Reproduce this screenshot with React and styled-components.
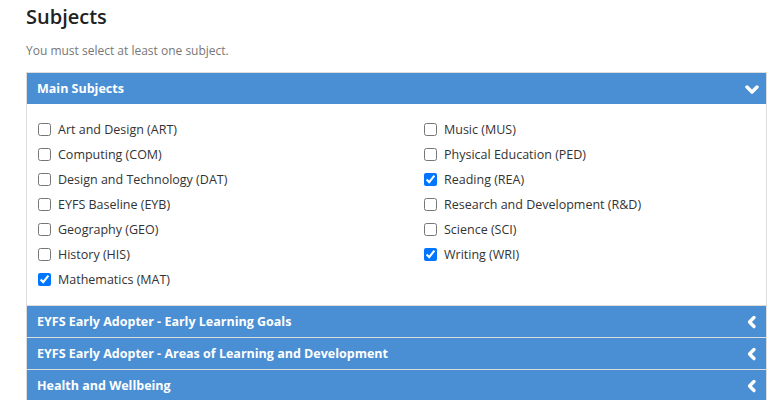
import React from "react";
import styled, { createGlobalStyle } from "styled-components";

const GlobalStyle = createGlobalStyle`
  body {
    margin: 0;
    background: #fff;
    font-family: "Open Sans", "Noto Sans", sans-serif;
    color: #333;
  }
`;

const Page = styled.div`
  padding: 0 6px 0 26px;
`;

const Title = styled.h2`
  margin: 0;
  padding-top: 3px;
  font-size: 20px;
  line-height: 28px;
  font-weight: 600;
  color: #222;
`;

const Hint = styled.p`
  margin: 11px 0 0;
  font-size: 12px;
  line-height: 18px;
  color: #777;
`;

const Accordion = styled.div`
  margin-top: 12px;
  border: 1px solid #ddd;
  border-bottom: none;
`;

const PanelHeader = styled.div`
  height: 31px;
  display: flex;
  align-items: center;
  justify-content: space-between;
  padding: 0 7px 0 10px;
  background: #4a8fd4;
  color: #fff;
  font-size: 12.5px;
  font-weight: 700;
  border-top: ${(p) => (p.first ? "none" : "1px solid #ddd")};
`;

const Chevron = styled.svg`
  width: 14px;
  height: 14px;
  fill: none;
  stroke: #fff;
  stroke-width: 3.4;
  stroke-linecap: round;
  stroke-linejoin: round;
`;

const PanelBody = styled.div`
  display: grid;
  grid-template-columns: 386px 1fr;
  grid-auto-flow: column;
  grid-template-rows: repeat(7, 25px);
  padding: 13px 12px 13px 11px;
`;

const Option = styled.label`
  display: flex;
  align-items: center;
  gap: 7px;
  font-size: 12.5px;
  color: #333;
  input {
    margin: 0;
    width: 13px;
    height: 13px;
  }
`;

const left = [
  ["Art and Design (ART)", false],
  ["Computing (COM)", false],
  ["Design and Technology (DAT)", false],
  ["EYFS Baseline (EYB)", false],
  ["Geography (GEO)", false],
  ["History (HIS)", false],
  ["Mathematics (MAT)", true],
];

const right = [
  ["Music (MUS)", false],
  ["Physical Education (PED)", false],
  ["Reading (REA)", true],
  ["Research and Development (R&D)", false],
  ["Science (SCI)", false],
  ["Writing (WRI)", true],
];

const collapsed = [
  "EYFS Early Adopter - Early Learning Goals",
  "EYFS Early Adopter - Areas of Learning and Development",
  "Health and Wellbeing",
];

const ChevronDown = () => (
  <Chevron viewBox="0 0 14 14">
    <polyline points="2,5 7,10 12,5" />
  </Chevron>
);

const ChevronLeft = () => (
  <Chevron viewBox="0 0 14 14">
    <polyline points="9,2.5 4.5,7 9,11.5" />
  </Chevron>
);

export default function App() {
  return (
    <Page>
      <GlobalStyle />
      <Title>Subjects</Title>
      <Hint>You must select at least one subject.</Hint>
      <Accordion>
        <PanelHeader first>
          <span>Main Subjects</span>
          <ChevronDown />
        </PanelHeader>
        <PanelBody>
          {left.map(([name, on]) => (
            <Option key={name}>
              <input type="checkbox" defaultChecked={on} />
              {name}
            </Option>
          ))}
          {right.map(([name, on]) => (
            <Option key={name}>
              <input type="checkbox" defaultChecked={on} />
              {name}
            </Option>
          ))}
        </PanelBody>
        {collapsed.map((t) => (
          <PanelHeader key={t}>
            <span>{t}</span>
            <ChevronLeft />
          </PanelHeader>
        ))}
      </Accordion>
    </Page>
  );
}
